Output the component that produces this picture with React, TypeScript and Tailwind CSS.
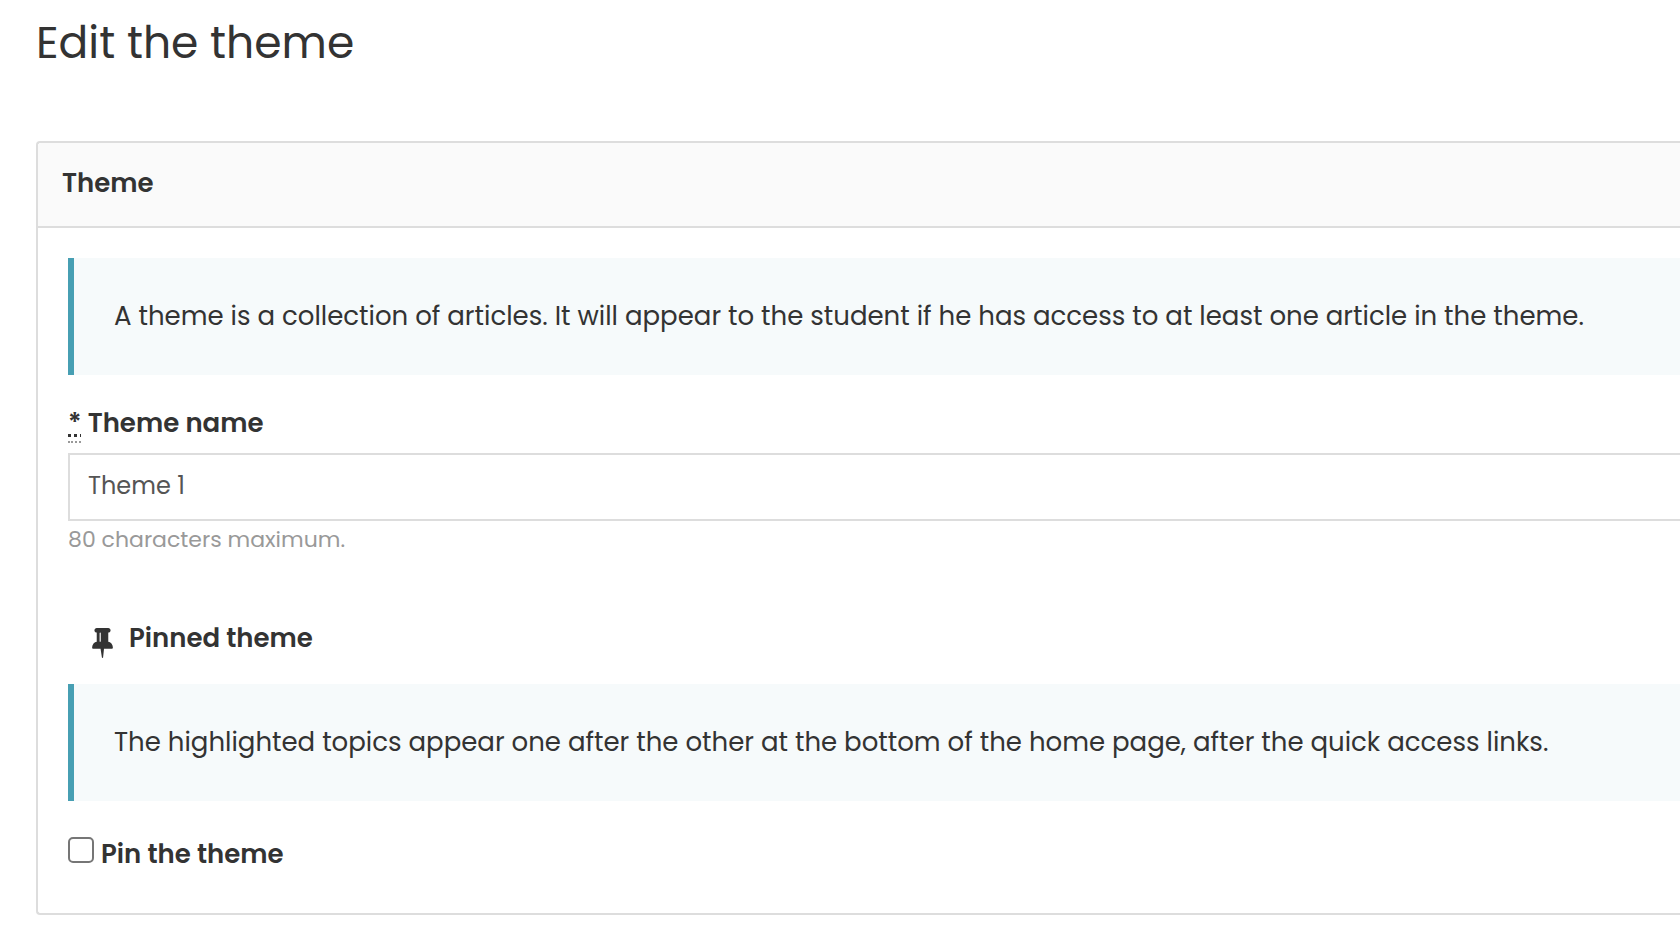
import React, { useState } from 'react';

const PinIcon: React.FC = () => (
  <svg className="mt-2 w-[21px] h-[30px] shrink-0" fill="currentColor" viewBox="320 128 1152 1664" aria-hidden="true">
    <path d="M800 864v-448q0-14-9-23t-23-9-23 9-9 23v448q0 14 9 23t23 9 23-9 9-23zm672 352q0 26-19 45t-45 19h-429l-51 483q-2 12-10.500 20.500t-20.500 8.500h-1q-27 0-32-27l-76-485h-404q-26 0-45-19t-19-45q0-123 78.500-221.500t177.500-98.500v-512q-52 0-90-38t-38-90 38-90 90-38h640q52 0 90 38t38 90-38 90-90 38v512q99 0 177.500 98.500t78.500 221.500z" />
  </svg>
);

const Callout: React.FC<{ children: React.ReactNode }> = ({ children }) => (
  <div className="border-l-[6px] border-[#479fb3] bg-[#f6fafb] pl-10 py-10">
    <p className="leading-[37px]">{children}</p>
  </div>
);

export default function App() {
  const [name, setName] = useState('Theme 1');
  const [pinned, setPinned] = useState(false);

  return (
    <main className="bg-white pl-9 pb-4 font-[Poppins,Inter,sans-serif] text-[26px] text-[#333333]">
      <h1 className="pt-[13px] text-[44px] leading-[60px]">Edit the theme</h1>

      <form className="mt-[68px] rounded-l border-2 border-r-0 border-[#dddddd]">
        <header className="border-b-2 border-[#dddddd] rounded-tl bg-[#fafafa] px-6 pt-5 pb-[22px]">
          <h2 className="font-semibold leading-[41px]">Theme</h2>
        </header>

        <div className="pl-[30px] pt-[30px] pb-[42px]">
          <Callout>
            A theme is a collection of articles. It will appear to the student if he has access to at least one article in the theme.
          </Callout>

          <div className="mt-7">
            <label htmlFor="theme-name" className="block font-semibold leading-10">
              <abbr title="required" className="border-b-2 border-dotted border-[#999999] underline decoration-dotted decoration-3 underline-offset-2">*</abbr>{' '}
              Theme name
            </label>
            <input
              id="theme-name"
              type="text"
              maxLength={80}
              value={name}
              onChange={(e) => setName(e.target.value)}
              className="mt-[10px] block h-[68px] w-full border-2 border-r-0 border-[#dddddd] bg-white px-[18px] pb-1 text-[24px] text-[#555555] outline-none"
            />
            <p className="mt-[3px] text-[22px] leading-8 text-[#999999]">80 characters maximum.</p>
          </div>

          <h3 className="mt-16 flex items-start gap-4 pl-6 font-semibold leading-[37px]">
            <PinIcon />
            Pinned theme
          </h3>

          <div className="mt-[26px]">
            <Callout>
              The highlighted topics appear one after the other at the bottom of the home page, after the quick access links.
            </Callout>
          </div>

          <label className="mt-9 flex items-start gap-[7px] font-semibold leading-[34px]">
            <input
              type="checkbox"
              checked={pinned}
              onChange={(e) => setPinned(e.target.checked)}
              className="size-[26px] appearance-none rounded-[5px] border-2 border-[#767676] bg-white checked:bg-[#479fb3]"
            />
            Pin the theme
          </label>
        </div>
      </form>
    </main>
  );
}
